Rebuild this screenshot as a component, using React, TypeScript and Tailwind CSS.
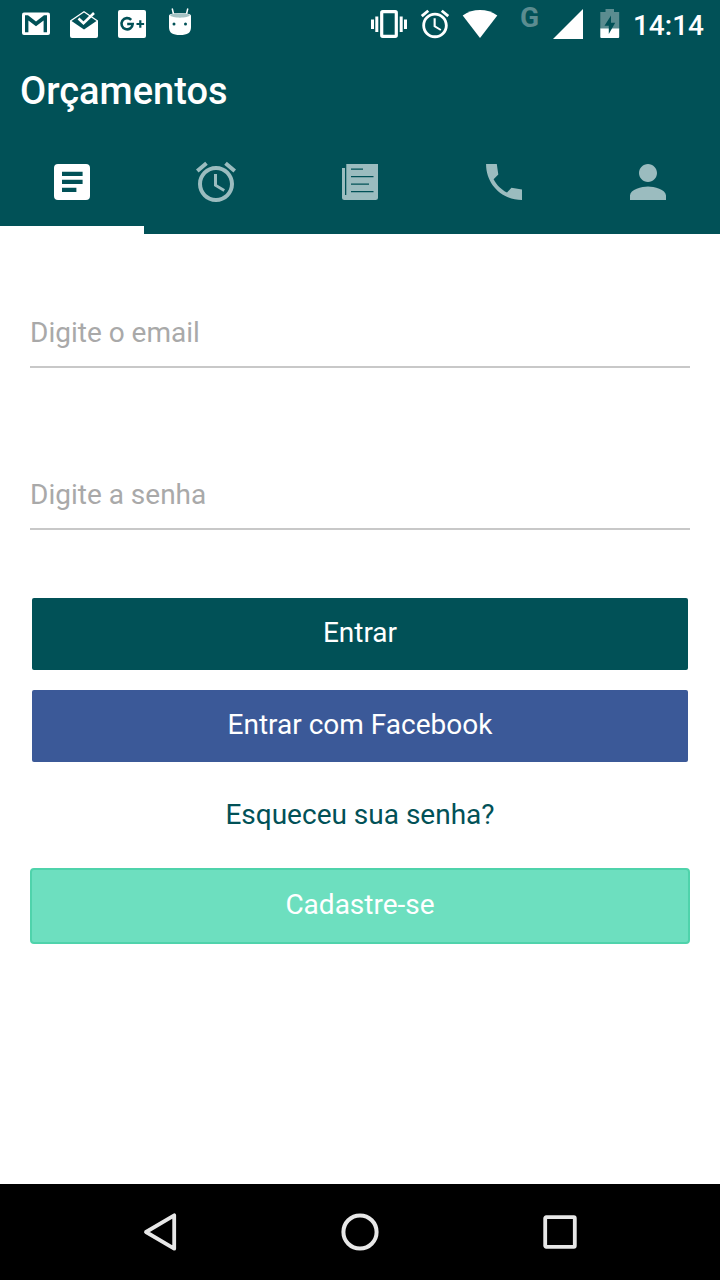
import type { ReactNode } from "react";

type IconProps = { children: ReactNode; className: string; viewBox: string };

function Icon({ children, className, viewBox }: IconProps) {
  return (
    <svg className={className} viewBox={viewBox} fill="currentColor" aria-hidden="true">
      {children}
    </svg>
  );
}

const alarmPath =
  "M22 5.72l-4.6-3.86-1.29 1.53 4.6 3.86L22 5.72zM7.88 3.39L6.6 1.86 2 5.71l1.29 1.53 4.59-3.85zM12.5 8H11v6l4.75 2.85.75-1.23-4-2.37V8zM12 4c-4.97 0-9 4.03-9 9s4.02 9 9 9c4.97 0 9-4.03 9-9s-4.03-9-9-9zm0 16c-3.87 0-7-3.13-7-7s3.13-7 7-7 7 3.13 7 7-3.13 7-7 7z";

function StatusBar() {
  return (
    <div className="flex h-12 justify-between pl-5 pr-4">
      {/* Notifications */}
      <div className="flex gap-4">
        <Icon className="h-12 w-8" viewBox="0 0 32 48">
          <rect x="2" y="12.5" width="28" height="22.5" rx="2" />
          <path d="M5 15.3H8L16 21.5L24 15.3H27V32.3H23.6V20.5L16 26.3L8.4 20.5V32.3H5z" fill="#015157" />
        </Icon>
        <Icon className="h-12 w-8" viewBox="0 0 32 48">
          <path d="M2 20.5L16 11L30 20.5V36a2 2 0 0 1-2 2H4a2 2 0 0 1-2-2z" />
          <path d="M3.5 21L16 12.5L28.5 21L16 29.5z" fill="#015157" />
          <path d="M10.5 18.5L15.5 23.3L26 13" fill="none" stroke="currentColor" strokeWidth="2.6" />
        </Icon>
        <Icon className="h-12 w-8" viewBox="0 0 32 48">
          <rect x="2" y="10" width="28" height="28" rx="2" />
          <path d="M15.2 19.9A5.6 5.6 0 1 0 16.7 24H11.2" fill="none" stroke="#015157" strokeWidth="2.6" />
          <path d="M24.3 20.2V27.8M20.5 24H28.1" fill="none" stroke="#015157" strokeWidth="2.2" />
        </Icon>
        <Icon className="h-12 w-8" viewBox="0 0 32 48">
          <path d="M9.5 14L8.2 8.5M22.5 14L23.8 8.5" fill="none" stroke="currentColor" strokeWidth="1.5" />
          <path d="M5 15.5C5 12 27 12 27 15.5V27C27 33 23.5 35 16 35S5 33 5 27z" />
          <path d="M6 15C8 12.6 24 12.6 26 15C25 18.5 7 18.5 6 15z" fill="#a6c3c5" />
          <circle cx="10" cy="24" r="1.5" fill="#015157" />
          <circle cx="21.5" cy="24" r="1.5" fill="#015157" />
        </Icon>
      </div>
      {/* System */}
      <div className="flex">
        <Icon className="mr-2.5 h-12 w-[38px]" viewBox="0 0 38 48">
          <path d="M1 19.5h3v9.5h-3zM5.3 16.5h3v15.5h-3zM29.7 16.5h3v15.5h-3zM34 19.5h3v9.5h-3z" />
          <rect x="11.7" y="11.7" width="14.6" height="24.6" rx="1" fill="none" stroke="currentColor" strokeWidth="3.2" />
        </Icon>
        <Icon className="mr-2.5 mt-[7px] h-[34px] w-[34px]" viewBox="0 0 24 24">
          <path d={alarmPath} />
        </Icon>
        <Icon className="mr-[22px] h-12 w-9" viewBox="0 0 36 48">
          <path d="M.7 15.5C11 8.3 25 8.3 35.3 15.5L18 38z" />
        </Icon>
        <span className="mr-3 mt-[1px] w-5 text-[28px] font-bold leading-[34px] text-[#5b8c90]">G</span>
        <Icon className="mr-4 h-12 w-8" viewBox="0 0 32 48">
          <path d="M1 39L31 9V39z" />
        </Icon>
        <Icon className="mr-[13px] h-12 w-5" viewBox="0 0 20 48">
          <path d="M.3 12h5.2V9h8.5v3h5.2v17H.3z" fill="#5b8c90" />
          <path d="M.3 28.5h18.9V37a1 1 0 0 1-1 1H1.3a1 1 0 0 1-1-1z" />
          <path d="M11 15.5L4.5 25.8H8.8V34L15.2 22.8H11z" fill="#015157" />
        </Icon>
        <span className="text-[28px] font-medium leading-[51px]">14:14</span>
      </div>
    </div>
  );
}

function Tabs() {
  return (
    <div className="grid grid-cols-5 text-[#9bbcbf]">
      <div className="flex h-24 justify-center border-b-8 border-white pt-5 text-white">
        <Icon className="h-12 w-12" viewBox="0 0 24 24">
          <path d="M19 3H5a2 2 0 0 0-2 2v14a2 2 0 0 0 2 2h14a2 2 0 0 0 2-2V5a2 2 0 0 0-2-2zm-4.8 14H7v-2.100h7.200zm3.100-4H7v-2.100h10.300zm0-4H7V6.900h10.300z" />
        </Icon>
      </div>
      <div className="flex justify-center pt-5">
        <Icon className="h-12 w-12" viewBox="0 0 24 24">
          <path d={alarmPath} />
        </Icon>
      </div>
      <div className="flex justify-center pt-5">
        <Icon className="h-12 w-12" viewBox="0 0 48 48">
          <path d="M10.3 6H42v33.5a2.5 2.5 0 0 1-2.5 2.5h-31A2.5 2.5 0 0 1 6 39.5V10h3v27h1.3z" />
          <path d="M15 11.2H27M15 18.7H37.5M15 26.2H33M15 33.7H37.5" fill="none" stroke="#015157" strokeWidth="1.3" />
        </Icon>
      </div>
      <div className="flex justify-center pt-5">
        <Icon className="h-12 w-12" viewBox="0 0 24 24">
          <path d="M21 15.7L15.73 14.85L13.5 17.3C10.7 15.8 8.2 13.4 6.8 10.6L9.15 8.3L8.4 3H3.03C3 13.2 10.8 21 21 21z" />
        </Icon>
      </div>
      <div className="flex justify-center pt-5">
        <Icon className="h-12 w-12" viewBox="0 0 512 512">
          <path d="M256 256c52.805 0 96-43.201 96-96s-43.195-96-96-96-96 43.201-96 96 43.195 96 96 96zm0 48c-63.598 0-192 32.402-192 96v48h384v-48c0-63.598-128.402-96-192-96z" />
        </Icon>
      </div>
    </div>
  );
}

export default function App() {
  return (
    <div className="flex h-[1280px] w-[720px] flex-col bg-white font-[Roboto,sans-serif]">
      <header className="h-[234px] bg-[#015157] text-white">
        <StatusBar />
        <h1 className="h-[90px] pl-5 text-[38px] font-medium leading-[86px]">Orçamentos</h1>
        <Tabs />
      </header>

      <main className="flex flex-1 flex-col px-[30px] text-[28px]">
        <input
          type="email"
          placeholder="Digite o email"
          className="mt-[62px] h-[72px] shrink-0 border-b-2 border-[#c8c8c8] pt-0.5 outline-none placeholder:text-[#a9a9a9]"
        />
        <input
          type="password"
          placeholder="Digite a senha"
          className="mt-[90px] h-[72px] shrink-0 border-b-2 border-[#c8c8c8] pt-0.5 outline-none placeholder:text-[#a9a9a9]"
        />
        <button className="mx-0.5 mt-[68px] h-[72px] rounded-xs bg-[#015157] pb-0.5 text-white">Entrar</button>
        <button className="mx-0.5 mt-5 h-[72px] rounded-xs bg-[#3b5998] pb-0.5 text-white">
          Entrar com Facebook
        </button>
        <a className="mt-8 text-center leading-[42px] text-[#015157]">Esqueceu sua senha?</a>
        <button className="mt-8 h-[76px] rounded border-2 border-[#4fd3ab] bg-[#6ddfbf] pb-0.5 text-white">
          Cadastre-se
        </button>
      </main>

      {/* Android navigation bar */}
      <nav className="flex h-24 items-center justify-center gap-[152px] bg-black text-[#e8e8e8]">
        <Icon className="h-12 w-12" viewBox="0 0 48 48">
          <path d="M38.2 7.3V40.7L10 24z" fill="none" stroke="currentColor" strokeWidth="3.8" strokeLinejoin="round" />
        </Icon>
        <Icon className="h-12 w-12" viewBox="0 0 48 48">
          <circle cx="24" cy="24" r="16.6" fill="none" stroke="currentColor" strokeWidth="4" />
        </Icon>
        <Icon className="h-12 w-12" viewBox="0 0 48 48">
          <rect x="9.2" y="9.2" width="29.6" height="29.6" rx="1" fill="none" stroke="currentColor" strokeWidth="3.8" />
        </Icon>
      </nav>
    </div>
  );
}
